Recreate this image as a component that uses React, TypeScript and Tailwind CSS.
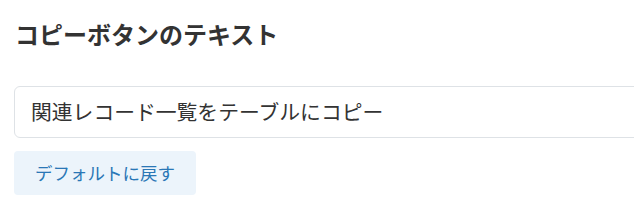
import React from "react";

export default function App() {
  return (
    <div
      className="w-[634px] h-[214px] overflow-hidden bg-white pl-[14px] pt-[17px]"
      style={{ fontFamily: '"Noto Sans CJK JP", "Noto Sans", sans-serif' }}
    >
      <h2 className="text-[24px] leading-[33px] font-bold text-[#333333] pl-[1px]">
        コピーボタンのテキスト
      </h2>
      <div className="mt-[36px] w-[660px] h-[52px] border border-[#dee2e6] rounded-[6px] flex items-center pl-[16px] text-[20.8px] text-[#333333]">
        関連レコード一覧をテーブルにコピー
      </div>
      <button className="mt-[13px] w-[182px] h-[44px] rounded-[4px] bg-[#ecf4fb] text-[#2a77b6] text-[17.5px] flex items-center justify-center">
        デフォルトに戻す
      </button>
    </div>
  );
}
